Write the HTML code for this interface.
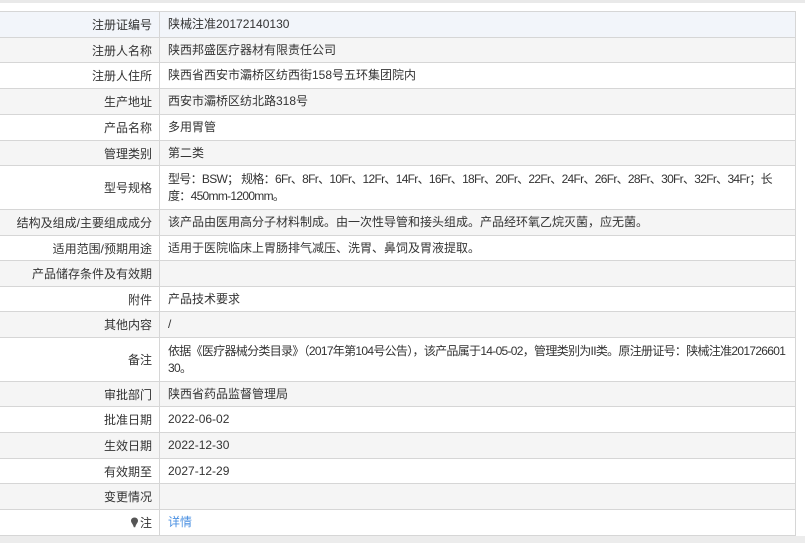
<!DOCTYPE html>
<html><head><meta charset="utf-8"><style>
body{margin:0;width:805px;height:543px;background:#fff;font-family:"Liberation Sans","Noto Sans CJK SC",sans-serif;font-size:12px;color:#333;position:relative;overflow:hidden}
.top{position:absolute;left:0;top:0;width:805px;height:3px;background:#e9e9e9}
.bot{position:absolute;left:0;top:536px;width:805px;height:7px;background:#ececec}
.t{position:absolute;left:0;top:11px;width:795px;border-top:1px solid #d6d6d6;border-right:1px solid #d6d6d6}
.r{display:flex;border-bottom:1px solid #d6d6d6;box-sizing:border-box}
.l{width:160px;border-right:1px solid #d6d6d6;text-align:right;padding-right:7px;box-sizing:border-box;display:flex;align-items:center;justify-content:flex-end}
.v{flex:1;padding-left:8px;display:flex;align-items:center;line-height:17px;padding-right:4px}
.w{word-break:break-all;letter-spacing:-0.7px}
.g{background:#f5f5f5}.b{background:#f2f5fa}
a{color:#4a90e2;text-decoration:none}
</style></head><body>
<div class="top"></div>
<div class="t">
<div class="r b" style="height:26px"><div class="l">注册证编号</div><div class="v">陕械注准20172140130</div></div>
<div class="r g" style="height:25px"><div class="l">注册人名称</div><div class="v">陕西邦盛医疗器材有限责任公司</div></div>
<div class="r" style="height:26px"><div class="l">注册人住所</div><div class="v">陕西省西安市灞桥区纺西街158号五环集团院内</div></div>
<div class="r g" style="height:26px"><div class="l">生产地址</div><div class="v">西安市灞桥区纺北路318号</div></div>
<div class="r" style="height:26px"><div class="l">产品名称</div><div class="v">多用胃管</div></div>
<div class="r g" style="height:25px"><div class="l">管理类别</div><div class="v">第二类</div></div>
<div class="r" style="height:44px"><div class="l">型号规格</div><div class="v"><span class="w">型号：BSW； 规格：6Fr、8Fr、10Fr、12Fr、14Fr、16Fr、18Fr、20Fr、22Fr、24Fr、26Fr、28Fr、30Fr、32Fr、34Fr；长度：450mm-1200mm。</span></div></div>
<div class="r g" style="height:26px"><div class="l">结构及组成/主要组成成分</div><div class="v">该产品由医用高分子材料制成。由一次性导管和接头组成。产品经环氧乙烷灭菌，应无菌。</div></div>
<div class="r" style="height:25px"><div class="l">适用范围/预期用途</div><div class="v">适用于医院临床上胃肠排气减压、洗胃、鼻饲及胃液提取。</div></div>
<div class="r g" style="height:26px"><div class="l">产品储存条件及有效期</div><div class="v"></div></div>
<div class="r" style="height:25px"><div class="l">附件</div><div class="v">产品技术要求</div></div>
<div class="r g" style="height:26px"><div class="l">其他内容</div><div class="v">/</div></div>
<div class="r" style="height:44px"><div class="l">备注</div><div class="v"><span class="w">依据《医疗器械分类目录》（2017年第104号公告），该产品属于14-05-02，管理类别为II类。原注册证号：陕械注准20172660130。</span></div></div>
<div class="r g" style="height:25px"><div class="l">审批部门</div><div class="v">陕西省药品监督管理局</div></div>
<div class="r" style="height:26px"><div class="l">批准日期</div><div class="v">2022-06-02</div></div>
<div class="r g" style="height:26px"><div class="l">生效日期</div><div class="v">2022-12-30</div></div>
<div class="r" style="height:25px"><div class="l">有效期至</div><div class="v">2027-12-29</div></div>
<div class="r g" style="height:26px"><div class="l">变更情况</div><div class="v"></div></div>
<div class="r" style="height:26px"><div class="l"><svg width="9" height="11" viewBox="0 0 9 11" style="margin-right:1px"><path d="M4.5 0.5C2.3 0.5 1 2 1 3.8c0 2 2.2 3.5 2.8 6.5h1.4C5.8 7.3 8 5.8 8 3.8 8 2 6.7 0.5 4.5 0.5z" fill="#555"/></svg>注</div><div class="v"><a>详情</a></div></div>
</div>
<div class="bot"></div>
</body></html>
